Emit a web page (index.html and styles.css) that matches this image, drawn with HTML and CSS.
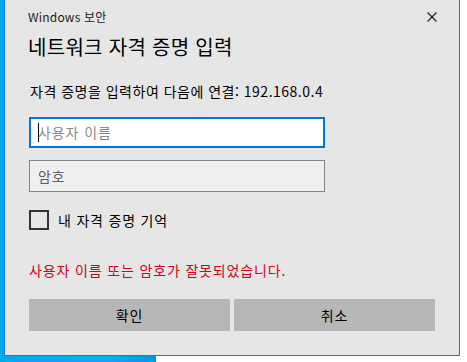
FILE: index.html
```html
<!DOCTYPE html>
<html lang="ko">
<head>
  <meta charset="UTF-8">
  <meta name="viewport" content="width=device-width, initial-scale=1.0">
  <title>Windows 보안</title>
  <link rel="stylesheet" href="styles.css">
</head>
<body>
  <div class="desktop">
    <div class="desktop-wall"></div>

    <div class="dialog">
      <div class="titlebar">
        <span class="app-name">Windows 보안</span>
        <svg class="close-icon" width="10" height="10" viewBox="0 0 10 10">
          <path d="M0.5 0.5 L9.5 9.5 M9.5 0.5 L0.5 9.5" stroke="#1f1f1f" stroke-width="1.1" fill="none" />
        </svg>
      </div>

      <h1 class="heading">네트워크 자격 증명 입력</h1>
      <p class="message">자격 증명을 입력하여 다음에 연결: 192.168.0.4</p>

      <div class="field field-active">
        <span class="caret"></span>
        <span class="placeholder">사용자 이름</span>
      </div>
      <div class="field field-idle">
        <span class="placeholder">암호</span>
      </div>

      <label class="remember">
        <span class="checkbox"></span>
        <span>내 자격 증명 기억</span>
      </label>

      <p class="error">사용자 이름 또는 암호가 잘못되었습니다.</p>

      <div class="buttons">
        <button class="btn">확인</button>
        <button class="btn">취소</button>
      </div>
    </div>
  </div>
</body>
</html>
```

FILE: styles.css
```css
* {
  margin: 0;
  padding: 0;
  box-sizing: border-box;
  font-family: 'Noto Sans CJK KR', 'Noto Sans', sans-serif;
}

body {
  width: 467px;
  height: 362px;
  overflow: hidden;
  background: #fff;
  color: #000;
}

.desktop {
  position: relative;
  width: 467px;
  height: 362px;
}

.desktop-wall {
  width: 156px;
  height: 362px;
  background: linear-gradient(90deg, #00a8f0, #00b0f2 70%, #0096e4);
}

/* the window sits on the desktop canvas */
.dialog {
  position: absolute;
  left: 4px;
  top: -1px;
  width: 456px;
  height: 357px;
  background: #e6e6e6;
  border: 1px solid #1979d6;
  padding: 0 24px 24px 24px;
  display: flex;
  flex-direction: column;
}

.titlebar {
  height: 33px;
  display: flex;
  align-items: center;
  justify-content: space-between;
  margin-left: -1px;
  margin-right: -2px;
}

.app-name {
  font-size: 12px;
  letter-spacing: 0.2px;
  color: #1a1a1a;
  padding-top: 1px;
}

.close-icon {
  display: block;
  margin-top: 1px;
}

.heading {
  font-size: 20px;
  font-weight: 400;
  line-height: 28px;
  letter-spacing: 0.3px;
  margin-left: -1px;
  color: #000;
}

.message {
  font-size: 14px;
  line-height: 20px;
  letter-spacing: 0.5px;
  margin-top: 20px;
  margin-left: 1px;
  color: #000;
}

.field {
  width: 296px;
  height: 32px;
  display: flex;
  align-items: center;
  padding-left: 9px;
  font-size: 14px;
  letter-spacing: 0.9px;
}

.field-active {
  margin-top: 16px;
  background: #fff;
  border: 2px solid #0078d7;
  padding-left: 7px;
}

.field-active .placeholder {
  color: #8a8a8a;
}

.field-idle {
  margin-top: 12px;
  background: #f0f0f0;
  border: 1px solid #858585;
  padding-left: 8px;
}

.field-idle .placeholder {
  color: #5f5f5f;
}

.caret {
  width: 1px;
  height: 19px;
  background: #000;
  margin-right: -1px;
}

.remember {
  margin-top: 18px;
  height: 20px;
  display: flex;
  align-items: center;
  gap: 9px;
  font-size: 14px;
  letter-spacing: 0.8px;
  color: #000;
}

.checkbox {
  width: 20px;
  height: 20px;
  border: 2px solid #333;
}

.error {
  margin-top: 30px;
  font-size: 14px;
  line-height: 20px;
  letter-spacing: 0.85px;
  color: #d0021b;
}

.buttons {
  margin-top: 19px;
  display: flex;
  gap: 4px;
}

.btn {
  flex: 1;
  height: 32px;
  border: none;
  background: #b7b7b7;
  font-size: 14px;
  letter-spacing: 0.8px;
  color: #000;
}
```
